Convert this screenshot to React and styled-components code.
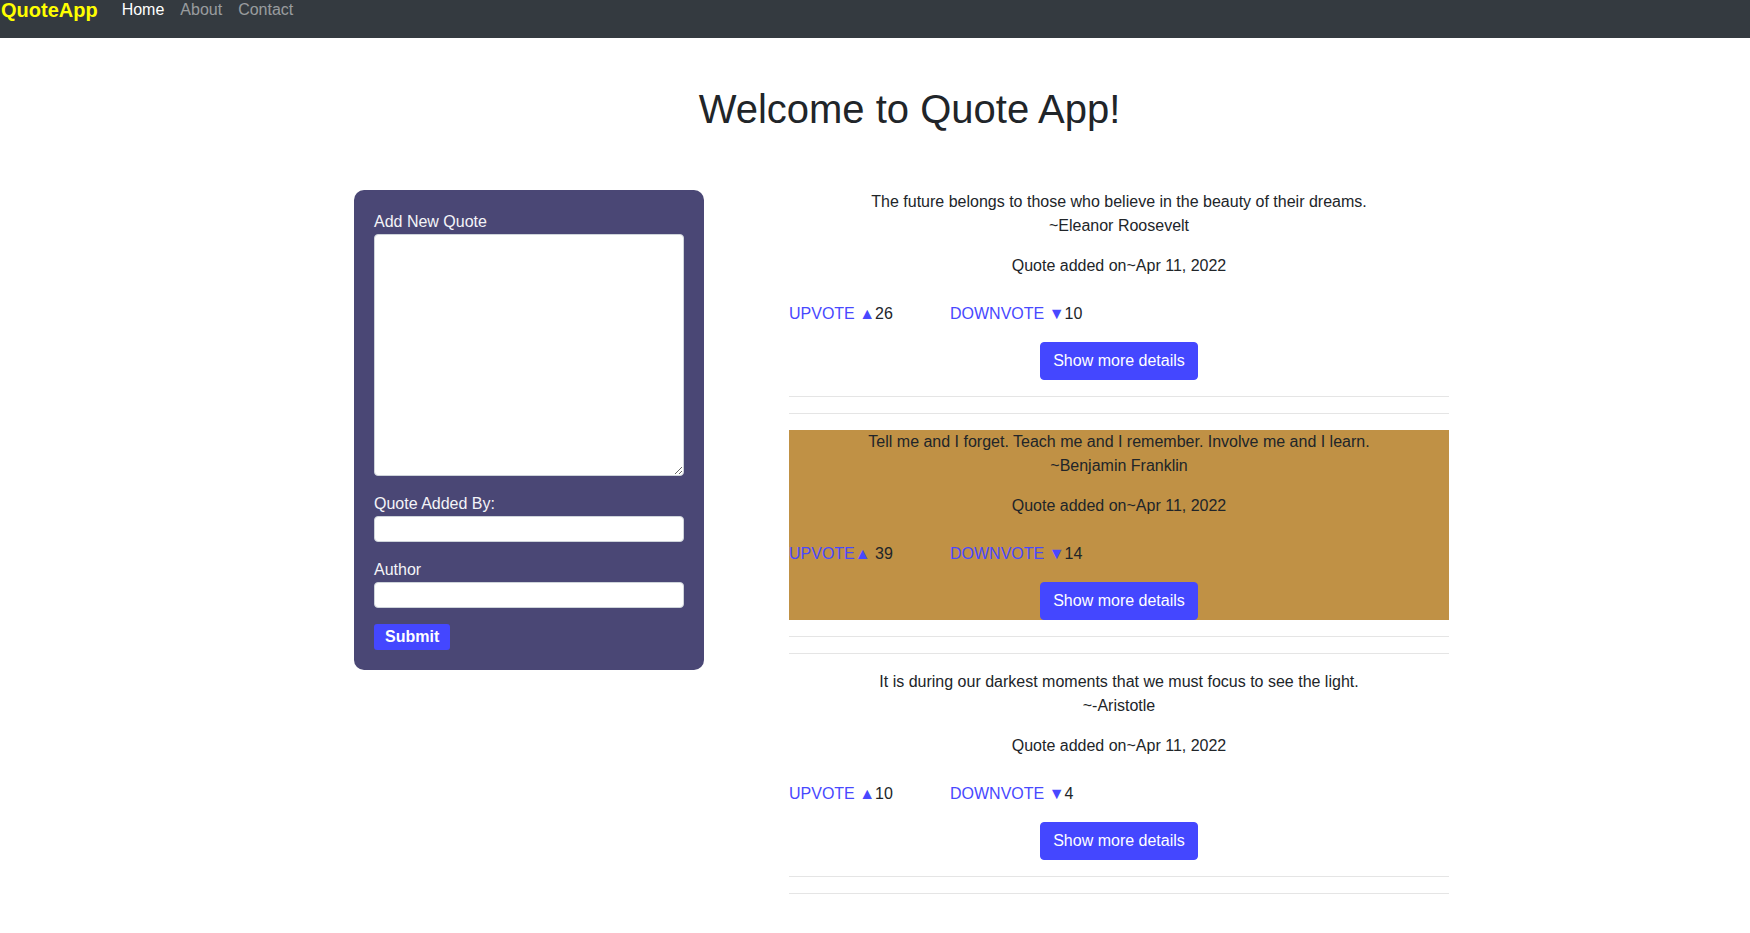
import React from "react";
import styled, { createGlobalStyle } from "styled-components";

const GlobalStyle = createGlobalStyle`
  *, *::before, *::after { box-sizing: border-box; }
  html, body { margin: 0; padding: 0; background: #fff; }
  body {
    font-family: "Liberation Sans", Arial, sans-serif;
    font-size: 16px;
    line-height: 1.5;
    color: #212529;
  }
`;

const NavBar = styled.nav`
  height: 38px;
  background: #343a40;
  display: flex;
  align-items: flex-start;
  padding-left: 1px;
`;

const Brand = styled.a`
  font-size: 20px;
  font-weight: 700;
  line-height: normal;
  color: #ffff00;
  margin-right: 16px;
  margin-top: -1px;
  text-decoration: none;
`;

const NavLink = styled.a`
  padding: 1px 8px 0;
  font-size: 16px;
  line-height: normal;
  color: ${(p) => (p.$active ? "#ffffff" : "rgba(255,255,255,0.5)")};
  text-decoration: none;
`;

const Main = styled.main`
  width: 1108px;
  margin-left: 354px;
`;

const Title = styled.h1`
  margin: 47px 0 57px;
  padding-left: 3px;
  font-size: 40px;
  font-weight: 500;
  line-height: 1.2;
  text-align: center;
  color: #212529;
`;

const Columns = styled.div`
  display: flex;
  align-items: flex-start;
  gap: 85px;
`;

const FormCard = styled.form`
  width: 350px;
  background: #4a4775;
  border-radius: 10px;
  padding: 20px 20px 20px;
  display: flex;
  flex-direction: column;
  align-items: flex-start;
`;

const Field = styled.div`
  width: 100%;
  margin-bottom: 16px;
`;

const Label = styled.label`
  display: block;
  line-height: 24px;
  color: #f4f4f8;
`;

const TextArea = styled.textarea`
  display: block;
  width: 100%;
  height: 242px;
  border: 1px solid #ced4da;
  border-radius: 4px;
  background: #fff;
  font-family: inherit;
  font-size: 16px;
  margin: 0;
`;

const TextInput = styled.input`
  display: block;
  width: 100%;
  height: 26px;
  border: 1px solid #ced4da;
  border-radius: 4px;
  background: #fff;
  font-family: inherit;
  font-size: 16px;
  margin: 0;
`;

const SubmitButton = styled.button`
  height: 26px;
  padding: 0 11px;
  border: none;
  border-radius: 3px;
  background: #4447ff;
  color: #fff;
  font-family: inherit;
  font-size: 16px;
  font-weight: 700;
  line-height: 26px;
`;

const QuoteList = styled.div`
  width: 660px;
`;

const QuoteBlock = styled.div`
  background: ${(p) => (p.$highlight ? "#c09145" : "transparent")};
  text-align: center;
`;

const QuoteText = styled.p`
  margin: 0 0 16px;
  line-height: 24px;
`;

const DateLine = styled.p`
  margin: 0 0 16px;
  line-height: 24px;
`;

const VoteRow = styled.div`
  display: flex;
  align-items: center;
  height: 38px;
  padding-top: 2px;
  text-align: left;
`;

const VoteGroup = styled.div`
  width: ${(p) => p.$width || "auto"};
  white-space: pre;
`;

const VoteLink = styled.span`
  color: #4848ff;
  cursor: pointer;
`;

const Count = styled.span`
  color: #212529;
`;

const DetailsButton = styled.button`
  display: block;
  margin: 10px auto 0;
  padding: 6px 12px;
  border: 1px solid #4447ff;
  border-radius: 4px;
  background: #4447ff;
  color: #fff;
  font-family: inherit;
  font-size: 16px;
  line-height: 24px;
`;

const Rule = styled.hr`
  margin: 16px 0;
  border: 0;
  border-top: 1px solid rgba(0, 0, 0, 0.1);
  height: 0;
`;

const quotes = [
  {
    text: "The future belongs to those who believe in the beauty of their dreams.",
    author: "~Eleanor Roosevelt",
    up: "UPVOTE ▲",
    upCount: "26",
    down: "DOWNVOTE ▼",
    downCount: "10",
  },
  {
    text: "Tell me and I forget. Teach me and I remember. Involve me and I learn.",
    author: "~Benjamin Franklin",
    up: "UPVOTE▲",
    upCount: " 39",
    down: "DOWNVOTE ▼",
    downCount: "14",
    highlight: true,
  },
  {
    text: "It is during our darkest moments that we must focus to see the light.",
    author: "~-Aristotle",
    up: "UPVOTE ▲",
    upCount: "10",
    down: "DOWNVOTE ▼",
    downCount: "4",
  },
];

export default function App() {
  return (
    <>
      <GlobalStyle />
      <NavBar>
        <Brand href="#">QuoteApp</Brand>
        <NavLink href="#" $active>
          Home
        </NavLink>
        <NavLink href="#">About</NavLink>
        <NavLink href="#">Contact</NavLink>
      </NavBar>
      <Main>
        <Title>Welcome to Quote App!</Title>
        <Columns>
          <FormCard onSubmit={(e) => e.preventDefault()}>
            <Field>
              <Label>Add New Quote</Label>
              <TextArea />
            </Field>
            <Field>
              <Label>Quote Added By:</Label>
              <TextInput type="text" />
            </Field>
            <Field>
              <Label>Author</Label>
              <TextInput type="text" />
            </Field>
            <SubmitButton type="submit">Submit</SubmitButton>
          </FormCard>
          <QuoteList>
            {quotes.map((q, i) => (
              <React.Fragment key={i}>
                <QuoteBlock $highlight={q.highlight}>
                  <QuoteText>
                    {q.text}
                    <br />
                    {q.author}
                  </QuoteText>
                  <DateLine>Quote added on~Apr 11, 2022</DateLine>
                  <VoteRow>
                    <VoteGroup $width="161px">
                      <VoteLink>{q.up}</VoteLink>
                      <Count>{q.upCount}</Count>
                    </VoteGroup>
                    <VoteGroup>
                      <VoteLink>{q.down}</VoteLink>
                      <Count>{q.downCount}</Count>
                    </VoteGroup>
                  </VoteRow>
                  <DetailsButton type="button">Show more details</DetailsButton>
                </QuoteBlock>
                <Rule />
                <Rule />
              </React.Fragment>
            ))}
          </QuoteList>
        </Columns>
      </Main>
    </>
  );
}
